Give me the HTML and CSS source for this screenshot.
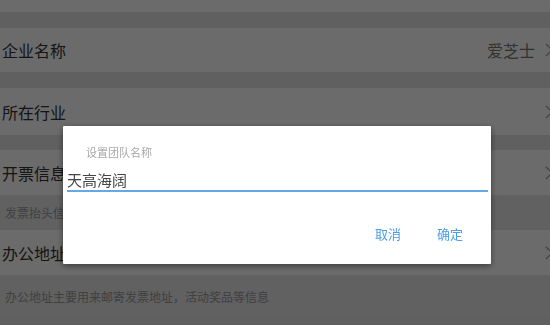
FILE: index.html
```html
<!DOCTYPE html>
<html lang="zh">
<head>
<meta charset="utf-8">
<link rel="stylesheet" href="styles.css">
</head>
<body>
<div class="page">
  <div class="row row-top"></div>
  <div class="band band-16"></div>
  <div class="row row-44">
    <span class="label">企业名称</span>
    <span class="right"><span class="value">爱芝士</span><svg class="chev" width="8" height="14" viewBox="0 0 8 14"><polyline points="1,1 7,7 1,13" fill="none" stroke="#9a9a9a" stroke-width="1.2"/></svg></span>
  </div>
  <div class="band band-16"></div>
  <div class="row row-47">
    <span class="label">所在行业</span>
    <span class="right"><svg class="chev" width="8" height="14" viewBox="0 0 8 14"><polyline points="1,1 7,7 1,13" fill="none" stroke="#9a9a9a" stroke-width="1.2"/></svg></span>
  </div>
  <div class="band band-15"></div>
  <div class="row row-45">
    <span class="label">开票信息</span>
    <span class="right"><svg class="chev" width="8" height="14" viewBox="0 0 8 14"><polyline points="1,1 7,7 1,13" fill="none" stroke="#9a9a9a" stroke-width="1.2"/></svg></span>
  </div>
  <div class="sub sub-35">发票抬头信息用于开具发票</div>
  <div class="row row-45">
    <span class="label">办公地址</span>
    <span class="right"><svg class="chev" width="8" height="14" viewBox="0 0 8 14"><polyline points="1,1 7,7 1,13" fill="none" stroke="#9a9a9a" stroke-width="1.2"/></svg></span>
  </div>
  <div class="sub sub-42">办公地址主要用来邮寄发票地址，活动奖品等信息</div>
  <div class="band band-rest"></div>
</div>
<div class="overlay"></div>
<div class="dialog">
  <div class="dlg-label">设置团队名称</div>
  <div class="dlg-input">天高海阔</div>
  <div class="dlg-actions">
    <span class="btn">取消</span>
    <span class="btn">确定</span>
  </div>
</div>
</body>
</html>
```
FILE: styles.css
```css
* { box-sizing: border-box; }
html, body { margin: 0; padding: 0; }
body {
  width: 550px;
  height: 325px;
  overflow: hidden;
  font-family: "Noto Sans CJK SC", "Noto Sans", sans-serif;
  background: #e4e4e6;
}
.page {
  display: flex;
  flex-direction: column;
}
.row {
  background: #fefefe;
  display: flex;
  align-items: center;
  justify-content: space-between;
  padding-left: 2px;
}
.row-top { height: 12px; }
.row-44 { height: 44px; }
.row-47 { height: 47px; }
.row-45 { height: 45px; }
.band { background: #e4e4e6; }
.band-16 { height: 16px; }
.band-15 { height: 15px; }
.band-rest { height: 20px; }
.label {
  font-size: 16px;
  color: #333;
}
.right {
  display: flex;
  align-items: center;
  gap: 10px;
  margin-right: -3px;
}
.value {
  font-size: 16px;
  color: #777;
}
.chev { display: block; }
.sub {
  background: #e6e6e8;
  font-size: 12px;
  color: #999;
  display: flex;
  align-items: center;
  padding-left: 5px;
}
.sub-35 { height: 35px; }
.sub-42 { height: 42px; }
.overlay {
  position: fixed;
  inset: 0;
  background: rgba(0, 0, 0, 0.58);
}
.dialog {
  position: fixed;
  left: 63px;
  top: 126px;
  width: 428px;
  height: 138px;
  background: #fff;
  box-shadow: 0 2px 6px rgba(0, 0, 0, 0.45);
  border-radius: 1px;
  padding: 19px 3px 0 4px;
  display: flex;
  flex-direction: column;
}
.dlg-label {
  font-size: 11px;
  color: #a8a8a8;
  padding-left: 19px;
  line-height: 14px;
}
.dlg-input {
  margin-top: 11px;
  font-size: 15px;
  line-height: 20px;
  color: #444;
  padding-bottom: 0;
  border-bottom: 2px solid #64a9e6;
}
.dlg-actions {
  margin-top: 34px;
  display: flex;
  justify-content: flex-end;
  gap: 36px;
  padding-right: 25px;
}
.btn {
  font-size: 13px;
  color: #4d9de3;
  line-height: 16px;
}
```
